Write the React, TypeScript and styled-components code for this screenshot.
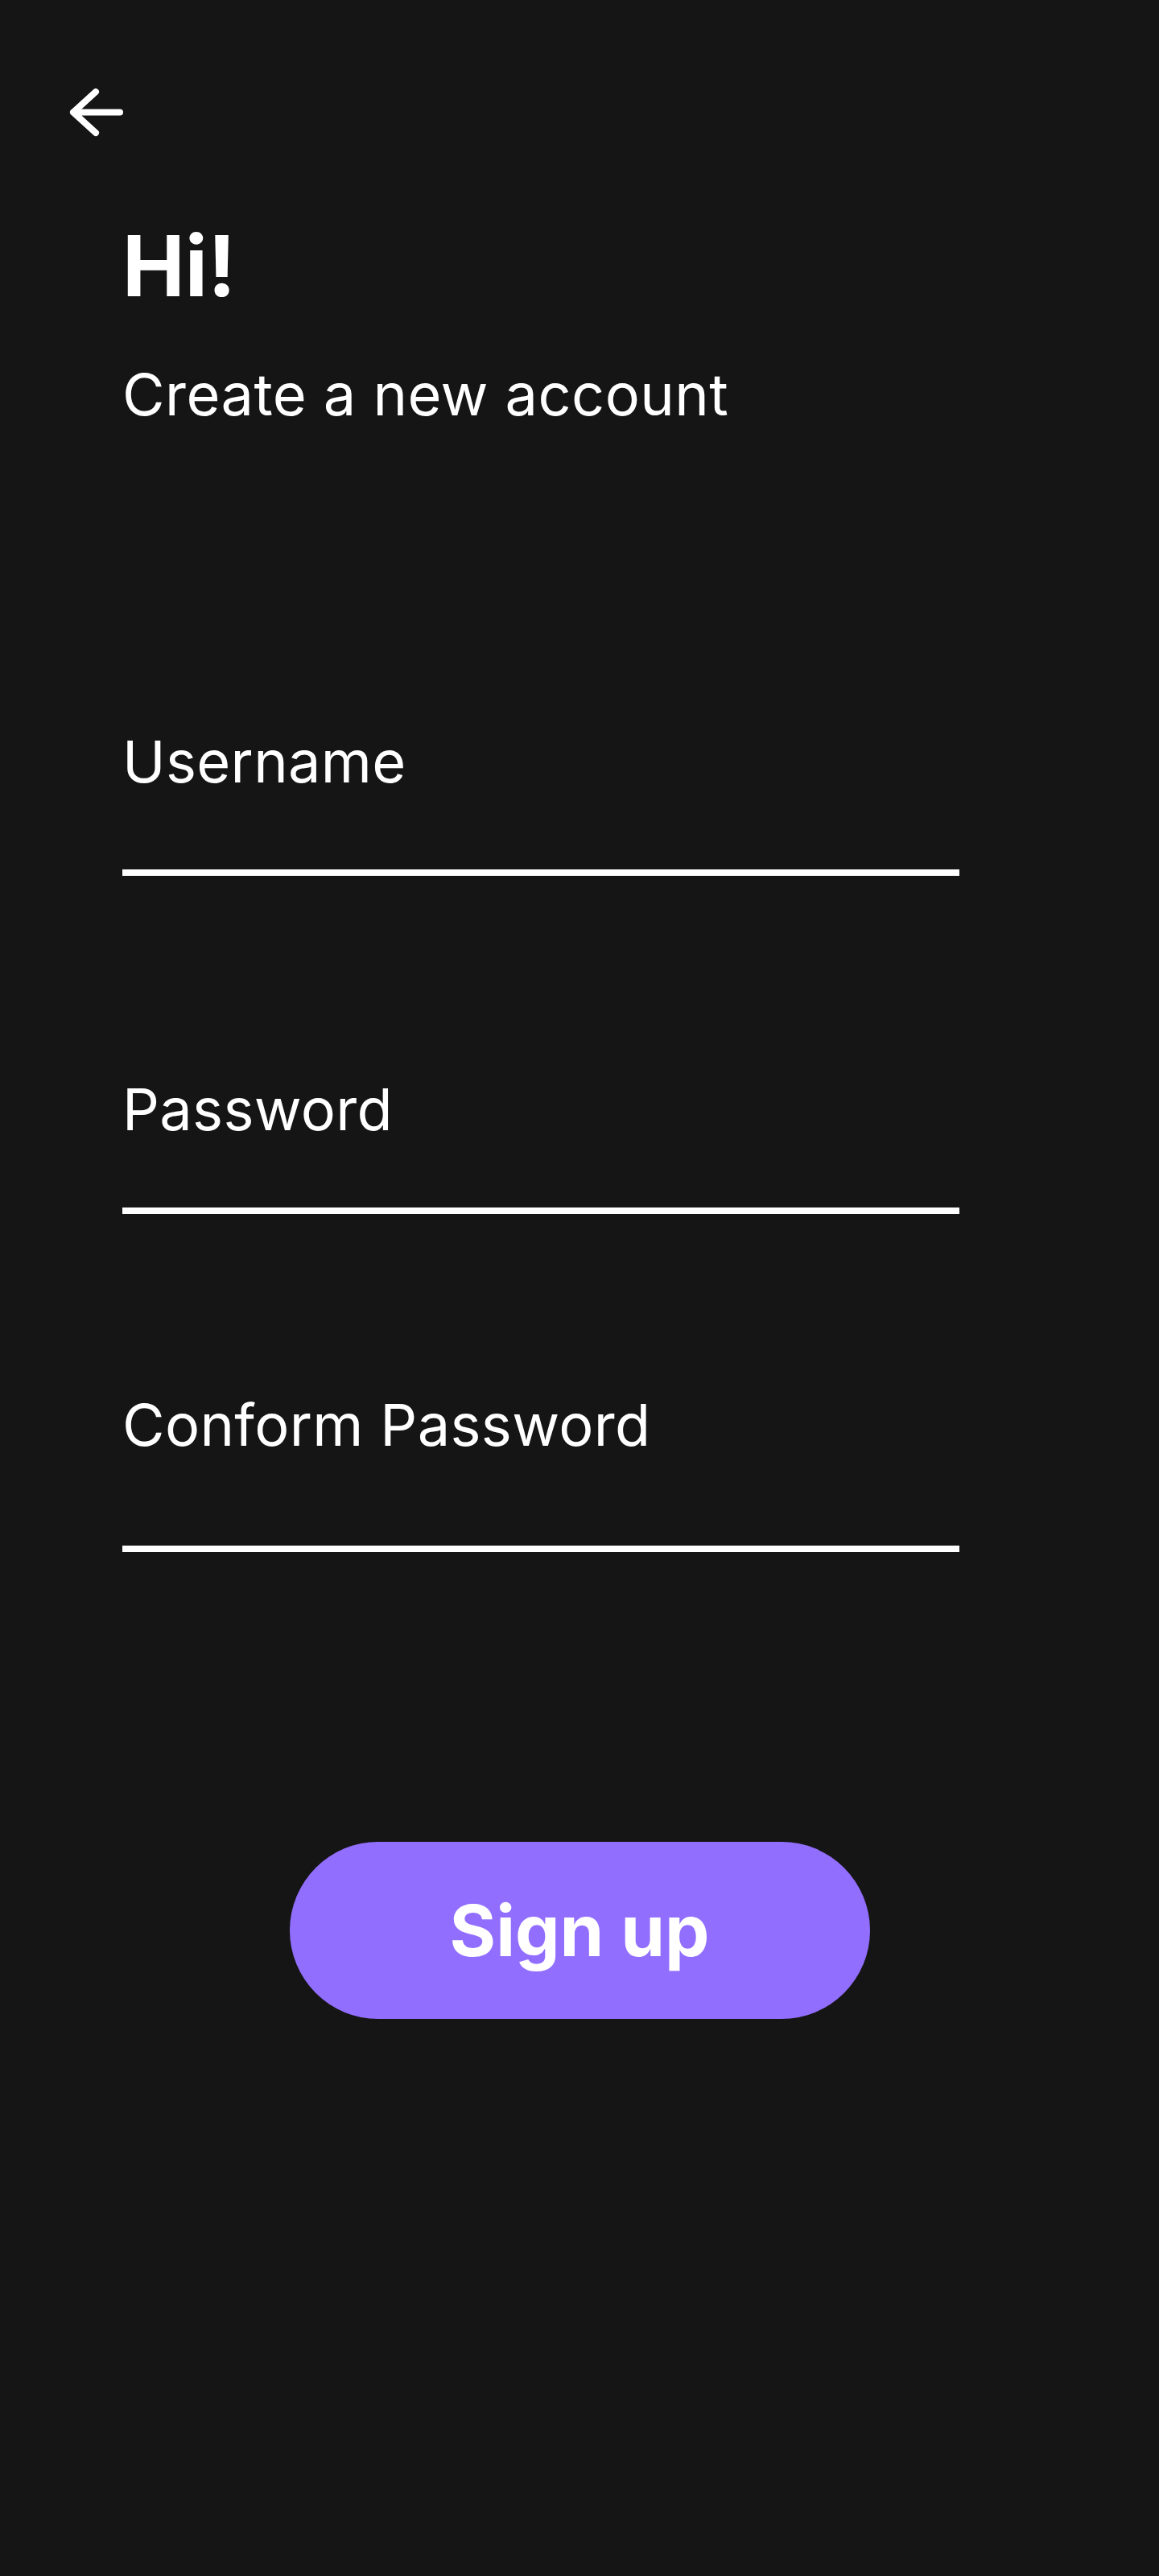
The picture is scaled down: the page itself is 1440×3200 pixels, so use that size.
import React from "react";
import styled, { createGlobalStyle } from "styled-components";

const Global = createGlobalStyle`
  html, body { margin: 0; padding: 0; background: #151515; }
  body { font-family: Inter, "Noto Sans", sans-serif; color: #ffffff; }
`;

const Page = styled.div`
  width: 1440px;
  min-height: 3200px;
  background: #151515;
  display: flex;
  flex-direction: column;
`;

const TopBar = styled.div`
  height: 175px;
  padding: 103px 0 0 80px;
  box-sizing: border-box;
`;

const BackButton = styled.button`
  width: 80px;
  height: 72px;
  padding: 0;
  border: none;
  background: transparent;
  cursor: pointer;
  display: block;
  svg { display: block; }
`;

const Content = styled.div`
  padding-left: 152px;
  display: flex;
  flex-direction: column;
`;

const Title = styled.h1`
  margin: 103px 0 0 0;
  font-size: 104px;
  line-height: 104px;
  font-weight: 700;
`;

const Subtitle = styled.p`
  margin: 72px 0 0 0;
  font-size: 72px;
  line-height: 72px;
  font-weight: 400;
  letter-spacing: 0.45px;
`;

const Field = styled.label<{ $top: number; $gap: number }>`
  display: flex;
  flex-direction: column;
  width: 1040px;
  margin-top: ${(p) => p.$top}px;
  gap: ${(p) => p.$gap}px;
`;

const FieldLabel = styled.span`
  font-size: 72px;
  line-height: 72px;
  font-weight: 400;
  letter-spacing: 0.35px;
`;

const Underline = styled.div`
  height: 8px;
  background: #ffffff;
`;

const ButtonRow = styled.div`
  display: flex;
  justify-content: center;
  margin-top: 360px;
`;

const SignUp = styled.button`
  width: 721px;
  height: 220px;
  border: none;
  border-radius: 110px;
  background: #926eff;
  color: #ffffff;
  font-family: Inter, "Noto Sans", sans-serif;
  font-size: 88px;
  font-weight: 700;
  cursor: pointer;
`;

const fields = [
  { label: "Username", top: 384, gap: 98 },
  { label: "Password", top: 254, gap: 86 },
  { label: "Conform Password", top: 226, gap: 114 },
];

export default function App() {
  return (
    <Page>
      <Global />
      <TopBar>
        <BackButton aria-label="Back">
          <svg width="80" height="72" viewBox="0 0 80 72" fill="none">
            <path
              d="M69 36.5H11M39 11L11 36.5L39 62"
              stroke="#ffffff"
              strokeWidth="8"
              strokeLinecap="round"
              strokeLinejoin="round"
            />
          </svg>
        </BackButton>
      </TopBar>
      <Content>
        <Title>Hi!</Title>
        <Subtitle>Create a new account</Subtitle>
        {fields.map((f) => (
          <Field key={f.label} $top={f.top} $gap={f.gap}>
            <FieldLabel>{f.label}</FieldLabel>
            <Underline />
          </Field>
        ))}
      </Content>
      <ButtonRow>
        <SignUp>Sign up</SignUp>
      </ButtonRow>
    </Page>
  );
}
